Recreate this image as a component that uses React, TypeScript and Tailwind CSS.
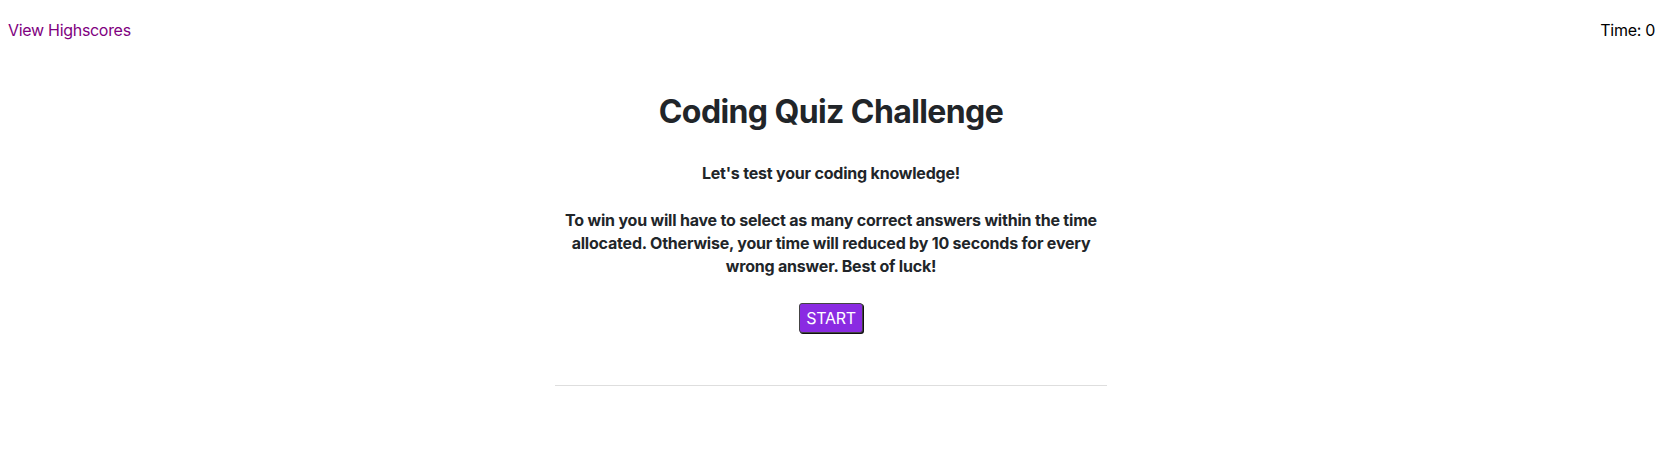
import React from 'react';

// Start screen of the coding quiz: header bar, intro text, start button.
export default function App() {
  return (
    <div className="min-h-screen bg-white text-[#212529] font-['Inter','Liberation_Sans',sans-serif]">
      {/* Header */}
      <header className="flex justify-between pl-2 pr-[7px] pt-[18px] text-base leading-6 tracking-[-0.3px]">
        <a href="#" className="text-[#800080]">
          View Highscores
        </a>
        <span className="text-black">Time: 0</span>
      </header>

      {/* Intro */}
      <main className="mx-auto w-[552px] text-center">
        <h1 className="mt-[51px] text-[32px] font-bold leading-[38px] tracking-[-0.6px]">
          Coding Quiz Challenge
        </h1>
        <p className="mt-[30px] text-base font-bold leading-6 tracking-[-0.2px]">
          Let's test your coding knowledge!
        </p>
        <p className="mt-6 text-base font-bold leading-[23px] tracking-[-0.2px]">
          To win you will have to select as many correct answers within the time allocated.
          Otherwise, your time will reduced by 10 seconds for every wrong answer. Best of luck!
        </p>
        <button className="mt-[25px] rounded-[3px] border border-[#444] bg-[#8a2be2] px-[6px] py-[4px] text-base leading-5 tracking-[-0.3px] text-white shadow-[1px_1px_0_#111]">
          START
        </button>
        <hr className="mt-[52px] border-t border-[#dedede]" />
      </main>
    </div>
  );
}
